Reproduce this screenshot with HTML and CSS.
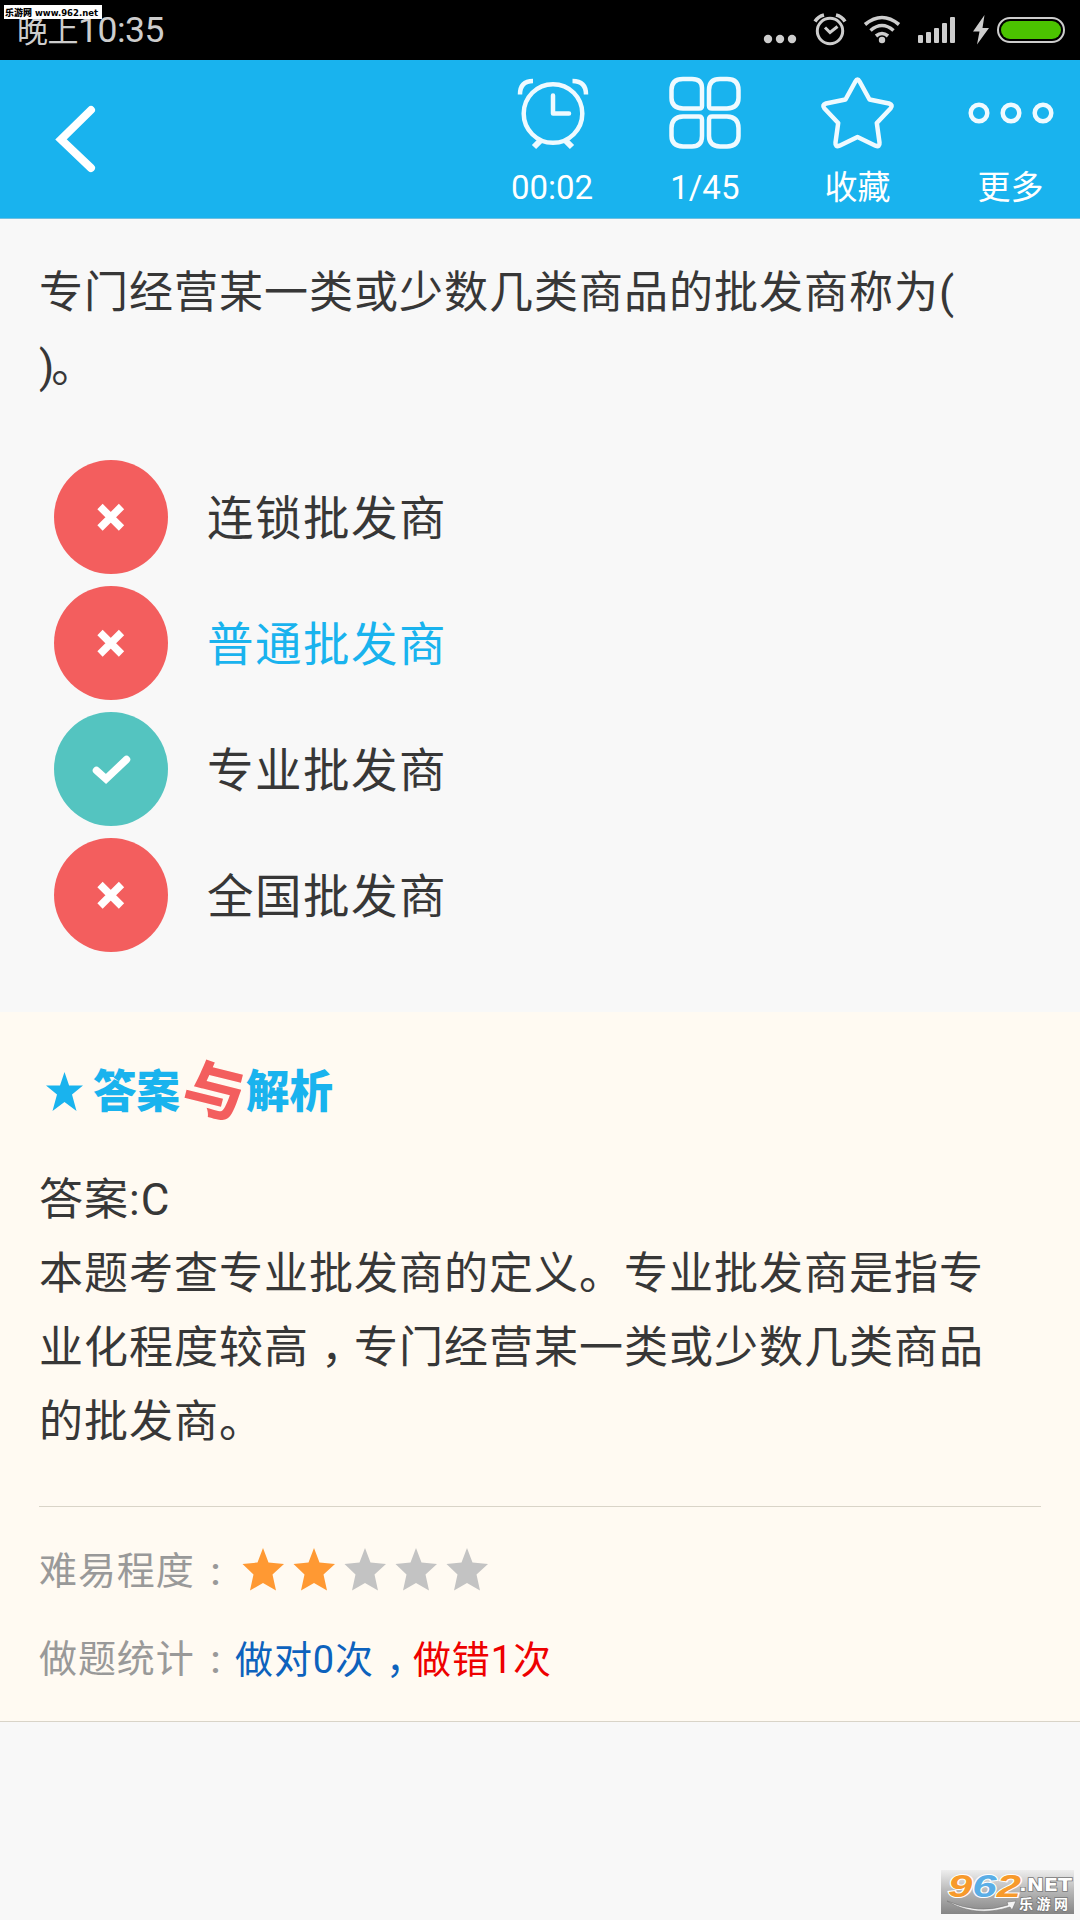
FILE: index.html
```html
<!DOCTYPE html>
<html lang="zh-CN">
<head>
<meta charset="utf-8">
<title>答案与解析</title>
<link rel="stylesheet" href="styles.css">
</head>
<body>
<div class="screen">
  <div class="statusbar">
    <span class="clock"><span class="period">晚上</span>10:35</span>
    <svg class="status-icons" width="320" height="60" viewBox="0 0 320 60" fill="#cdcdcd">
      <circle cx="8" cy="39" r="4.2"/><circle cx="20" cy="39" r="4.2"/><circle cx="32" cy="39" r="4.2"/>
      <g fill="none" stroke="#cdcdcd" stroke-width="3">
        <circle cx="70" cy="31" r="12.7"/>
        <path d="M65 27.500l5 5 7.500-6"/>
        <path stroke-width="3.500" d="M55 21.500q3-5 9-6.500M85 21.500q-3-5-9-6.500"/>
      </g>
      <g fill="none" stroke="#cdcdcd" stroke-width="3.600">
        <path d="M105 24.500q17-14 34 0"/><path d="M110.500 30.500q11.500-10 23 0"/><path d="M116 36q6-5 12 0"/>
      </g>
      <circle cx="122" cy="40" r="3.200"/>
      <rect x="158" y="35" width="5" height="8" rx="1"/><rect x="166" y="32" width="5" height="11" rx="1"/><rect x="174" y="28" width="5" height="15" rx="1"/><rect x="182" y="23" width="5" height="20" rx="1"/><rect x="190" y="17" width="5" height="26" rx="1"/>
      <path d="M224.500 15L213 31.500h6.500L217 44.500 229 28h-6.500z"/>
      <rect x="238" y="18" width="66" height="24" rx="12" fill="none" stroke="#cdcdcd" stroke-width="2"/>
      <rect x="241" y="21" width="60" height="18" rx="9" fill="#4bc400"/>
    </svg>
    <div class="site-tag"><svg width="98" height="14" viewBox="0 0 98 14"><text class="tag-cn" x="1" y="11" textLength="27" lengthAdjust="spacingAndGlyphs">乐游网</text><text class="tag-en" x="31" y="10.500" textLength="63" lengthAdjust="spacingAndGlyphs">www.962.net</text></svg></div>
  </div>

  <header class="toolbar">
    <svg class="back" width="60" height="80" viewBox="0 0 60 80"><path d="M41 11L11 40.500 41 69" fill="none" stroke="#fff" stroke-width="8" stroke-linecap="round"/></svg>
    <nav class="actions">
      <div class="action">
        <svg width="80" height="80" viewBox="0 0 80 80"><circle cx="41" cy="40.500" r="29.300"/><path d="M41 22.500V40.500H57"/><path d="M8 21.500Q8 8 21 8M60.500 8Q74 8 74 21.500" stroke-linecap="butt"/><path d="M29 67l-7 7M53 67l7 7" stroke-width="6" stroke-linecap="butt"/></svg>
        <span>00:02</span>
      </div>
      <div class="action">
        <svg width="80" height="80" viewBox="0 0 80 80"><path d="M18 6H27Q37 6 37 15V33Q37 35.500 34 35.500H18Q6.500 35 6.500 25V17Q6.500 6 18 6zM55 6H62Q73.500 6 73.500 17V25Q73.500 35 62 35.500H47Q44 35.500 44 33V17Q44 6 55 6zM18 43.500H34Q37 43.500 37 47V63Q37 73.500 27 73.500H18Q6.500 73 6.500 63V55Q6.500 44 18 43.500zM47 43.500H62Q73.500 44 73.500 55V63Q73.500 73 62 73.500H55Q44 73 44 63V47Q44 43.500 47 43.500z"/></svg>
        <span>1/45</span>
      </div>
      <div class="action">
        <svg width="80" height="80" viewBox="0 0 80 80"><path d="M37.400 8.500Q39.500 4.500 41.600 8.500L51.500 26.500 71 30.500Q75.500 32 72.500 35.500L58.800 50 61.500 69.500Q62 74.500 57.500 72.700L39.500 64 21.500 72.700Q17 74.500 17.500 69.500L20.200 50 6.500 35.500Q3.500 32 8 30.500L27.500 26.500z"/></svg>
        <span>收藏</span>
      </div>
      <div class="action">
        <svg width="90" height="80" viewBox="0 0 90 80"><circle cx="13" cy="40" r="8.300"/><circle cx="45" cy="40" r="8.300"/><circle cx="77" cy="40" r="8.300"/></svg>
        <span>更多</span>
      </div>
    </nav>
  </header>

  <main>
    <section class="question">
      <p class="body-text">专门经营某一类或少数几类商品的批发商称为(<br>)<span class="stop">。</span></p>
      <ul class="options">
        <li><span class="mark wrong"><svg width="114" height="114" viewBox="0 0 114 114"><path d="M46 46.500L67.500 68M67.500 46.500L46 68"/></svg></span><span class="choice">连锁批发商</span></li>
        <li class="picked"><span class="mark wrong"><svg width="114" height="114" viewBox="0 0 114 114"><path d="M46 46.500L67.500 68M67.500 46.500L46 68"/></svg></span><span class="choice">普通批发商</span></li>
        <li><span class="mark right"><svg width="114" height="114" viewBox="0 0 114 114"><path class="tick" d="M42.500 58.500L52 67 72.500 47.500"/></svg></span><span class="choice">专业批发商</span></li>
        <li><span class="mark wrong"><svg width="114" height="114" viewBox="0 0 114 114"><path d="M46 46.500L67.500 68M67.500 46.500L46 68"/></svg></span><span class="choice">全国批发商</span></li>
      </ul>
    </section>

    <section class="analysis">
      <svg class="heading" width="300" height="80" viewBox="0 0 300 80">
        <path fill="#19b3ee" d="M25.500 21l4.600 13.500H44L33 43.500l4.500 16.500L25.500 51 13.500 60l4.500-16.500L7 34.500h14z"/>
        <text class="title" x="54" y="57" textLength="87" lengthAdjust="spacingAndGlyphs">答案</text>
        <text class="joiner" transform="translate(141 54) rotate(14)" x="0" y="0">与</text>
        <text class="title" x="207" y="57" textLength="87" lengthAdjust="spacingAndGlyphs">解析</text>
      </svg>
      <p class="body-text">答案:C<br>本题考查专业批发商的定义。专业批发商是指专<br>业化程度较高<span class="comma">，</span>专门经营某一类或少数几类商品<br>的批发商。</p>
      <div class="stats">
        <div class="stat"><span class="label">难易程度<i>:</i></span>
          <svg class="stars" width="255" height="50" viewBox="0 0 255 50">
            <defs><path id="star" d="M25 3l5.500 14.500L46 19 34.500 29.500l3.500 16L25 38 12 45.500 15.500 29.500 4.500 19 19.500 17.500z"/></defs>
            <use href="#star" fill="#ff9933"/><use href="#star" x="51" fill="#ff9933"/><use href="#star" x="102" fill="#c3c3c3"/><use href="#star" x="153" fill="#c3c3c3"/><use href="#star" x="204" fill="#c3c3c3"/>
          </svg>
        </div>
        <div class="stat"><span class="label">做题统计<i>:</i></span><span class="ok">做对0次<span class="comma">，</span></span><span class="bad">做错1次</span></div>
      </div>
    </section>
  </main>

  <div class="logo">
    <svg width="133" height="44" viewBox="0 0 133 44">
      <defs><linearGradient id="plate" x1="0" y1="0" x2="0" y2="1"><stop offset="0" stop-color="#eee"/><stop offset=".5" stop-color="#b5b5b5"/><stop offset="1" stop-color="#858585"/></linearGradient></defs>
      <rect width="133" height="44" fill="url(#plate)"/>
      <path d="M6 31Q38 45 67 35L66 32 75 31 71 40 69 37Q34 48 6 31z" fill="#f4f4f4" stroke="#777" stroke-width=".6"/>
      <text class="num" x="7" y="27" textLength="73" lengthAdjust="spacingAndGlyphs"><tspan fill="#f79a2c">9</tspan><tspan fill="#5aaee6">6</tspan><tspan fill="#f79a2c">2</tspan></text>
      <text class="net" x="78" y="21" textLength="53" lengthAdjust="spacingAndGlyphs">.NET</text>
      <text class="cn" x="78" y="39" textLength="49" lengthAdjust="spacing">乐游网</text>
    </svg>
  </div>
</div>
</body>
</html>
```
FILE: styles.css
```css
* { box-sizing: border-box; }
body { margin: 0; background: #f8f8f8; color: #373737; font-family: Roboto, "Noto Sans CJK SC", sans-serif; }
p, ul { margin: 0; padding: 0; }
svg { display: block; flex: none; }
.screen { position: relative; width: 1080px; height: 1920px; overflow: hidden; }

.statusbar { position: relative; display: flex; justify-content: space-between; height: 60px; background: #000; }
.clock { padding-left: 17px; color: #cdcdcd; font-size: 35.500px; line-height: 60px; letter-spacing: -.5px; }
.period { font-size: 31px; }
.site-tag { position: absolute; left: 4px; top: 5px; background: #fff; }
.tag-cn { font: 900 9px "Noto Sans CJK SC", sans-serif; }
.tag-en { font: bold 9px "DejaVu Sans", sans-serif; }

.toolbar { display: flex; justify-content: space-between; height: 159px; background: #19b3ee; border-bottom: 1px solid #6fbfe0; }
.back { margin: 39px 0 0 50px; }
.actions { display: flex; padding: 13px 0 0; }
.action { display: flex; flex-direction: column; align-items: center; gap: 10px; width: 152.800px; color: #fff; font-size: 33px; line-height: 50px; }
.action:last-child { width: 146px; padding-left: 7px; }
.action svg { fill: none; stroke: #effaff; stroke-width: 4.500px; stroke-linecap: round; stroke-linejoin: round; }

.question { height: 793px; padding-top: 37px; }
.body-text { padding-left: 39px; font-size: 44px; line-height: 74px; letter-spacing: 1px; white-space: nowrap; }
.stop { margin-left: -4px; }
.options { list-style: none; padding-top: 50px; }
.options li { display: flex; align-items: center; gap: 39px; height: 126px; padding-left: 54px; font-size: 46.500px; letter-spacing: 1.500px; }
.choice { padding-bottom: 5px; }
.picked { color: #19b3ee; }
.mark { border-radius: 50%; }
.mark svg { fill: none; stroke: #fff; stroke-width: 7.500px; }
.mark .tick { stroke-linecap: round; }
.wrong { background: #f35e5e; }
.right { background: #54c4c0; }

.analysis { height: 710px; padding-top: 39px; background: #fffaf2; border-bottom: 1px solid #d9d4c8; }
.heading { margin: 0 0 32px 39px; overflow: visible; }
.title { font: 900 45px "Noto Sans CJK SC", sans-serif; fill: #19b3ee; }
.joiner { font: 900 60px "Noto Sans CJK SC", sans-serif; fill: #f35e5e; }
.comma { position: relative; left: 12px; line-height: 0; }
.stats { margin: 47px 39px 0; padding-top: 19px; border-top: 1px solid #d9d4c8; }
.stat { display: flex; align-items: center; height: 88px; font-size: 38px; letter-spacing: .900px; line-height: 56px; white-space: nowrap; }
.label { display: flex; flex: none; width: 196px; padding-top: 2px; color: #999; }
.label i { font-style: normal; font-weight: 500; margin-left: 16px; padding-top: 1px; }
.stars { margin-left: 3px; }
.ok, .bad { padding-top: 4px; }
.ok { color: #0d62bd; }
.bad { color: #ee0000; }

.logo { position: absolute; left: 941px; top: 1870px; }
.num { font: italic bold 31px "Liberation Sans", sans-serif; stroke: #fff; stroke-width: 2px; paint-order: stroke; }
.net { font: bold 18px "DejaVu Sans", sans-serif; fill: #fff; stroke: #777; stroke-width: 1.500px; paint-order: stroke; }
.cn { font: bold 14px "Noto Sans CJK SC", sans-serif; fill: #fff; stroke: #777; stroke-width: 1.500px; paint-order: stroke; }
```
